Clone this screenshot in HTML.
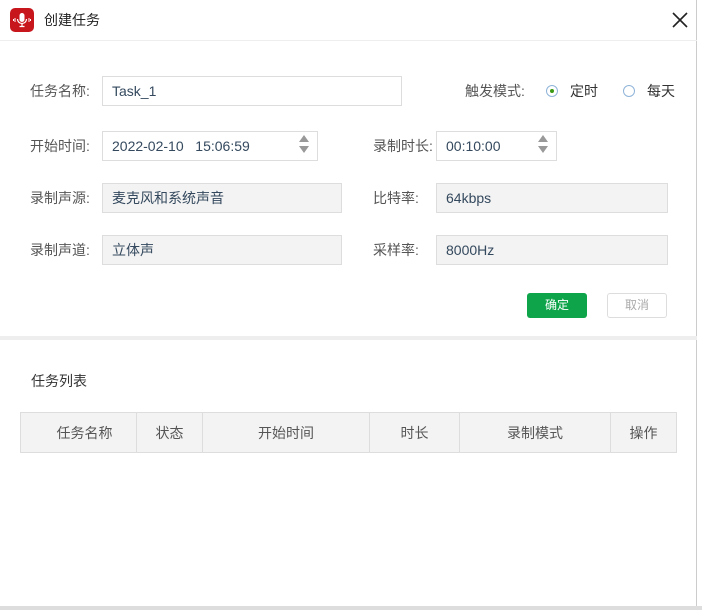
<!DOCTYPE html>
<html><head><meta charset="utf-8"><style>
*{margin:0;padding:0;box-sizing:border-box}
body{width:702px;height:610px;background:#fff;position:relative;overflow:hidden;font-family:"Liberation Sans","Noto Sans CJK SC",sans-serif;font-size:14px;color:#555}
.a{position:absolute;white-space:nowrap}
.lbl{color:#555;font-size:14px;line-height:20px}
.in{position:absolute;border:1px solid #ddd;background:#fff;color:#34495e;font-size:14px;padding-left:9px;display:flex;align-items:center}
.g{background:#f3f3f3}
.spin{position:absolute;right:8px;top:3px;width:10px}
.up{width:0;height:0;border-left:5px solid transparent;border-right:5px solid transparent;border-bottom:7px solid #999;margin-bottom:4px}
.dn{width:0;height:0;border-left:5px solid transparent;border-right:5px solid transparent;border-top:7px solid #999}
.radio{position:absolute;width:12px;height:12px;border:1px solid #8fb4d9;border-radius:50%;background:#fff}
th,td{border:1px solid #ddd;font-weight:normal;color:#555;font-size:14px}
</style></head><body>
<div class="a" style="left:0;top:0;width:697px;height:606px;background:#fff;border-right:1px solid #ccc"></div>
<div class="a" style="left:0;top:606px;width:702px;height:4px;background:#ddd"></div>
<!-- icon -->
<div class="a" style="left:10px;top:8px;width:24px;height:24px;border-radius:5px;background:#c8161d"></div>
<svg class="a" style="left:10px;top:8px" width="24" height="24" viewBox="0 0 24 24"><rect x="9.5" y="5" width="5" height="9" rx="2.5" fill="#fff"/><path d="M7.5 11a4.5 4.5 0 0 0 9 0M12 15.5v3M9.5 18.5h5" stroke="#fff" stroke-width="1.2" fill="none"/><path d="M5 10v4M3.5 11v2M19 10v4M20.5 11v2" stroke="#fff" stroke-width="1"/></svg>
<div class="a" style="left:44px;top:10px;font-size:14px;color:#222;line-height:20px">创建任务</div>
<svg class="a" style="left:671px;top:11px" width="18" height="18" viewBox="0 0 18 18"><path d="M2 2L16 16M16 2L2 16" stroke="#222" stroke-width="1.6"/></svg>
<div class="a" style="left:0;top:40px;width:697px;height:1px;background:#eee"></div>

<div class="a lbl" style="left:30px;top:81px">任务名称:</div>
<div class="in" style="left:102px;top:76px;width:300px;height:30px">Task_1</div>
<div class="a lbl" style="left:465px;top:81px">触发模式:</div>
<div class="radio" style="left:546px;top:85px"></div><div class="a" style="left:550px;top:89px;width:4px;height:4px;border-radius:50%;background:#3a9a14"></div>
<div class="a lbl" style="left:570px;top:81px;color:#333">定时</div>
<div class="radio" style="left:623px;top:85px"></div>
<div class="a lbl" style="left:647px;top:81px;color:#333">每天</div>

<div class="a lbl" style="left:30px;top:136px">开始时间:</div>
<div class="in" style="left:102px;top:131px;width:216px;height:30px">2022-02-10&nbsp;&nbsp;&nbsp;15:06:59<div class="spin"><div class="up"></div><div class="dn"></div></div></div>
<div class="a lbl" style="left:373px;top:136px">录制时长:</div>
<div class="in" style="left:436px;top:131px;width:121px;height:30px">00:10:00<div class="spin"><div class="up"></div><div class="dn"></div></div></div>

<div class="a lbl" style="left:30px;top:188px">录制声源:</div>
<div class="in g" style="left:102px;top:183px;width:240px;height:30px">麦克风和系统声音</div>
<div class="a lbl" style="left:373px;top:188px">比特率:</div>
<div class="in g" style="left:436px;top:183px;width:232px;height:30px">64kbps</div>

<div class="a lbl" style="left:30px;top:240px">录制声道:</div>
<div class="in g" style="left:102px;top:235px;width:240px;height:30px">立体声</div>
<div class="a lbl" style="left:373px;top:240px">采样率:</div>
<div class="in g" style="left:436px;top:235px;width:232px;height:30px">8000Hz</div>

<div class="a" style="left:527px;top:293px;width:60px;height:25px;background:#0ea54a;border-radius:3px;color:#fff;font-size:12px;text-align:center;line-height:25px">确定</div>
<div class="a" style="left:607px;top:293px;width:60px;height:25px;border:1px solid #ddd;border-radius:3px;color:#aaa;font-size:12px;text-align:center;line-height:23px">取消</div>

<div class="a" style="left:0;top:336px;width:697px;height:4px;background:#eee"></div>
<div class="a" style="left:31px;top:371px;font-size:14px;color:#333;line-height:20px">任务列表</div>

<table class="a" style="left:20px;top:412px;width:657px;height:41px;border-collapse:collapse;background:#f3f3f3;text-align:center">
<tr><th style="width:116px;padding-left:12px">任务名称</th><th style="width:66px">状态</th><th style="width:167px">开始时间</th><th style="width:90px">时长</th><th style="width:151px">录制模式</th><th>操作</th></tr></table>
</body></html>
